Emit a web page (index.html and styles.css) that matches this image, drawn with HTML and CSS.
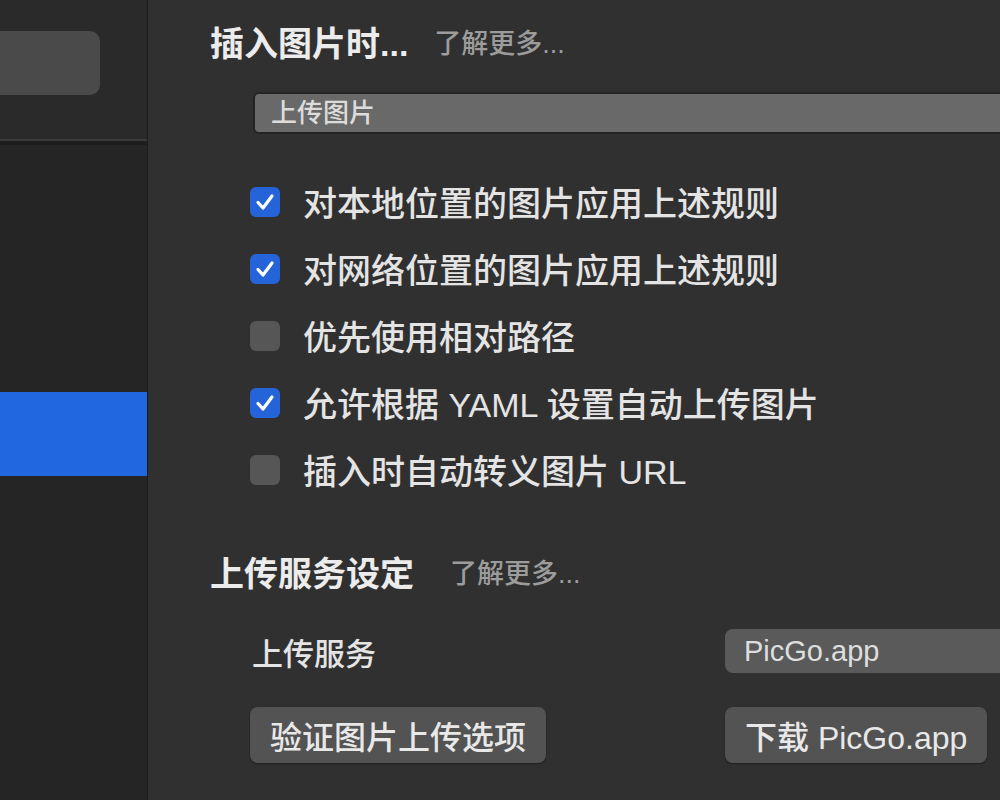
FILE: index.html
```html
<!DOCTYPE html>
<html lang="zh-CN">

<head>
    <meta charset="UTF-8">
    <meta name="viewport" content="width=device-width, initial-scale=1.0">
    <title>图像设置</title>
    <link rel="stylesheet" href="styles.css">
</head>

<body>
    <div class="sidebar">
        <div class="sidebar-top">
            <div class="search-box"></div>
        </div>
        <div class="sidebar-list">
            <div class="nav-item selected"></div>
        </div>
    </div>

    <div class="main">
        <div class="section-title">
            <span class="title-text">插入图片时...</span>
            <span class="more">了解更多...</span>
        </div>
        <div class="select-box">上传图片</div>

        <div class="check-list">
            <div class="check-row">
                <span class="checkbox checked">
                    <svg viewBox="0 0 30 30"><polyline points="8,15.5 13,21 22,9" /></svg>
                </span>
                <span>对本地位置的图片应用上述规则</span>
            </div>
            <div class="check-row">
                <span class="checkbox checked">
                    <svg viewBox="0 0 30 30"><polyline points="8,15.5 13,21 22,9" /></svg>
                </span>
                <span>对网络位置的图片应用上述规则</span>
            </div>
            <div class="check-row">
                <span class="checkbox"></span>
                <span>优先使用相对路径</span>
            </div>
            <div class="check-row">
                <span class="checkbox checked">
                    <svg viewBox="0 0 30 30"><polyline points="8,15.5 13,21 22,9" /></svg>
                </span>
                <span>允许根据 YAML 设置自动上传图片</span>
            </div>
            <div class="check-row">
                <span class="checkbox"></span>
                <span>插入时自动转义图片 URL</span>
            </div>
        </div>

        <div class="section-title second">
            <span class="title-text">上传服务设定</span>
            <span class="more">了解更多...</span>
        </div>

        <div class="service-grid">
            <div class="field-label">上传服务</div>
            <div class="popup">PicGo.app</div>
            <div><button class="btn">验证图片上传选项</button></div>
            <div><button class="btn">下载 PicGo.app</button></div>
        </div>
    </div>
</body>

</html>
```

FILE: styles.css
```css
html,
body {
    margin: 0;
    height: 100%;
    overflow: hidden;
}

body {
    display: flex;
    font-family: "Liberation Sans", "Noto Sans CJK SC", sans-serif;
    background-color: #303030;
    color: #e4e4e4;
}

/* 左侧栏 */
.sidebar {
    width: 147px;
    flex-shrink: 0;
    display: flex;
    flex-direction: column;
    background-color: #252525;
    border-right: 1px solid #1c1c1c;
}

.sidebar-top {
    height: 141px;
    padding-top: 31px;
    box-sizing: border-box;
    background-color: #2a2a2a;
    border-bottom: 2px solid #3a3a3a;
    box-shadow: 0 4px 0 #1e1e1e;
}

.search-box {
    width: 100px;
    height: 64px;
    background-color: #4a4a4a;
    border-radius: 0 10px 10px 0;
}

.sidebar-list {
    padding-top: 251px;
}

.nav-item {
    height: 84px;
}

.nav-item.selected {
    background-color: #2167df;
}

/* 主区域 */
.main {
    flex: 1;
    padding: 18px 0 0 62px;
}

.section-title {
    display: flex;
    align-items: center;
    height: 46px;
}

.title-text {
    font-size: 34px;
    font-weight: bold;
    color: #ececec;
}

.more {
    margin-left: 26px;
    font-size: 27px;
    font-weight: 500;
    color: #9c9c9c;
}

.section-title.second {
    margin-top: 45px;
}

.section-title.second .more {
    margin-left: 36px;
}

.select-box {
    margin: 28px 0 0 43px;
    height: 38px;
    line-height: 38px;
    padding-left: 16px;
    font-size: 26px;
    font-weight: 500;
    color: #dcdcdc;
    background-color: #696969;
    border: 2px solid #242424;
    border-right: none;
    border-radius: 6px 0 0 6px;
}

.check-list {
    margin: 34px 0 0 40px;
}

.check-row {
    display: flex;
    align-items: center;
    height: 67px;
    font-size: 34px;
    font-weight: 500;
}

.checkbox {
    width: 30px;
    height: 30px;
    margin-right: 23px;
    border-radius: 6px;
    background-color: #565656;
    flex-shrink: 0;
}

.checkbox.checked {
    background-color: #2563d8;
}

.checkbox svg {
    width: 30px;
    height: 30px;
    display: block;
}

.checkbox polyline {
    fill: none;
    stroke: #ffffff;
    stroke-width: 3.2;
    stroke-linecap: round;
    stroke-linejoin: round;
}

/* 上传服务 */
.service-grid {
    display: grid;
    grid-template-columns: 475px 1fr;
    grid-template-rows: 58px 76px;
    row-gap: 17px;
    align-items: center;
    margin: 28px 0 0 40px;
}

.field-label {
    font-size: 31px;
    font-weight: 500;
    padding-left: 2px;
}

.popup {
    height: 44px;
    line-height: 44px;
    padding-left: 19px;
    font-size: 29px;
    font-weight: 500;
    color: #dedede;
    background-color: #5a5a5a;
    border-radius: 8px 0 0 8px;
}

.btn {
    font-family: inherit;
    font-size: 32px;
    font-weight: 500;
    color: #e8e8e8;
    background-color: #535353;
    border: none;
    border-radius: 8px;
    height: 56px;
    padding: 0 20px;
    box-shadow: 0 1px 2px rgba(0, 0, 0, 0.4);
}
```
